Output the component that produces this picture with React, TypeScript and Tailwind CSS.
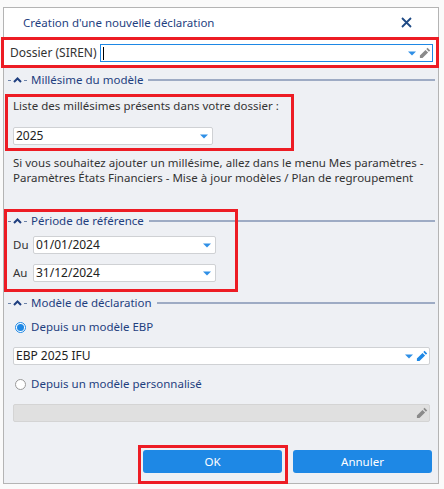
const font = { fontFamily: '"Noto Sans", sans-serif' };

const Caret = () => (
  <svg width="8" height="5" viewBox="0 0 8 5" className="shrink-0">
    <path d="M0 0.5h8L4 4.5z" fill="#2f8fe6" />
  </svg>
);

const Pencil = ({ color }: { color: string }) => (
  <svg width="12" height="12" viewBox="0 0 12 12" className="shrink-0">
    <path d="M8.6 0.8l2.6 2.6-1.3 1.3-2.6-2.6zM6.5 2.9l2.6 2.6-5.6 5.6H0.9V8.5z" fill={color} />
  </svg>
);

const Section = ({ title }: { title: string }) => (
  <div className="flex items-center h-[16px] pl-[4px] pr-[3px]">
    <span className="w-[3px] h-[1px] bg-[#6d84aa] mr-[2px]" />
    <svg width="9" height="6" viewBox="0 0 9 6" className="shrink-0">
      <path d="M1 5l3.5-3.5L8 5" fill="none" stroke="#1f3f7f" strokeWidth="2" />
    </svg>
    <span className="w-[3px] h-[1px] bg-[#6d84aa] ml-[2px] mr-[4px]" />
    <span className="text-[#1f3f7f] whitespace-nowrap">{title}</span>
    <span className="flex-1 h-[2px] bg-[#9eabc4] ml-[5px]" />
  </div>
);

const Select = ({ value, className }: { value: string; className: string }) => (
  <div className={`h-[18px] flex items-center justify-between bg-white border border-[#cfd1d4] rounded-[2px] pl-[2px] pr-[4px] text-[12px] text-[#222] ${className}`}>
    <span>{value}</span>
    <Caret />
  </div>
);

const Radio = ({ on, label }: { on: boolean; label: string }) => (
  <div className="flex items-center gap-[5px] pl-[2px] h-[16px]">
    <span className={`w-[11px] h-[11px] rounded-full border flex items-center justify-center bg-white ${on ? "border-[#1e88e5]" : "border-[#9a9a9a]"}`}>
      {on && <span className="w-[7px] h-[7px] rounded-full bg-[#1e88e5]" />}
    </span>
    <span className="text-[#1f3f7f]">{label}</span>
  </div>
);

export default function App() {
  return (
    <div className="relative w-[444px] h-[489px] bg-[#fafafa] pt-[7px] pl-[3px] text-[11.5px] leading-[16px] overflow-hidden" style={font}>
      <div className="w-[436px] h-[477px] border border-[#b4b4b4] bg-[#eef0f4] flex flex-col">
        {/* Header */}
        <div className="bg-white h-[59px] shrink-0">
          <div className="h-[29px] flex items-center justify-between pl-[19px] pr-[26px]">
            <span className="text-[#1f3f7f]">Création d'une nouvelle déclaration</span>
            <svg width="11" height="11" viewBox="0 0 11 11">
              <path d="M1 1l9 9M10 1l-9 9" stroke="#1f4a85" strokeWidth="1.8" fill="none" />
            </svg>
          </div>
          <div className="flex items-center h-[18px] mt-[7px] pl-[6px] pr-[5px]">
            <span className="w-[90px] text-[12px] text-[#333] whitespace-nowrap">Dossier (SIREN)</span>
            <div className="flex-1 h-[18px] border border-[#1e88e5] flex items-center pl-[2px] pr-[1px] bg-white">
              <span className="w-[1px] h-[13px] bg-black" />
              <span className="flex-1" />
              <Caret />
              <span className="w-[3px]" />
              <Pencil color="#8a8a8a" />
            </div>
          </div>
        </div>

        <div className="mt-[5px]">
          <Section title="Millésime du modèle" />
        </div>

        <div className="pl-[9px] pr-[5px] mt-[10px] text-[#333]">
          <p>Liste des millésimes présents dans votre dossier :</p>
          <Select value="2025" className="w-[200px] mt-[13px]" />
          <p className="mt-[10px] leading-[15px] whitespace-nowrap">
            Si vous souhaitez ajouter un millésime, allez dans le menu Mes paramètres -<br />
            Paramètres États Financiers - Mise à jour modèles / Plan de regroupement
          </p>
        </div>

        <div className="mt-[28px]">
          <Section title="Période de référence" />
        </div>
        <div className="pl-[9px] mt-[7px] flex flex-col gap-[10px] text-[#333]">
          <div className="flex items-center">
            <span className="w-[20px]">Du</span>
            <Select value="01/01/2024" className="w-[183px]" />
          </div>
          <div className="flex items-center">
            <span className="w-[20px]">Au</span>
            <Select value="31/12/2024" className="w-[183px]" />
          </div>
        </div>

        <div className="mt-[13px]">
          <Section title="Modèle de déclaration" />
        </div>
        <div className="pl-[9px] pr-[8px] mt-[8px]">
          <Radio on label="Depuis un modèle EBP" />
          <div className="mt-[12px] h-[18px] flex items-center justify-between bg-white border border-[#cfd1d4] rounded-[2px] pl-[2px] pr-[1px] text-[12px] text-[#222]">
            <span>EBP 2025 IFU</span>
            <div className="flex items-center gap-[3px]">
              <Caret />
              <Pencil color="#1e88e5" />
            </div>
          </div>
          <div className="mt-[11px]">
            <Radio on={false} label="Depuis un modèle personnalisé" />
          </div>
          <div className="mt-[12px] h-[18px] flex items-center justify-end bg-[#e0e0e0] border border-[#d4d4d4] rounded-[2px] pr-[1px]">
            <Pencil color="#8a8a8a" />
          </div>
        </div>

        {/* Buttons */}
        <div className="flex justify-end gap-[11px] pr-[6px] mt-[28px]">
          <button className="w-[139px] h-[23px] bg-[#1e88e5] rounded-[3px] text-white">OK</button>
          <button className="w-[139px] h-[23px] bg-[#1e88e5] rounded-[3px] text-white">Annuler</button>
        </div>
      </div>

      {/* Annotations rouges */}
      <div className="absolute left-[1px] top-[37px] w-[438px] h-[31px] border-[3px] border-[#ed1c24]" />
      <div className="absolute left-[5px] top-[94px] w-[289px] h-[57px] border-[3px] border-[#ed1c24]" />
      <div className="absolute left-[4px] top-[209px] w-[234px] h-[83px] border-[3px] border-[#ed1c24]" />
      <div className="absolute left-[138px] top-[445px] w-[150px] h-[39px] border-[3px] border-[#ed1c24]" />
    </div>
  );
}
